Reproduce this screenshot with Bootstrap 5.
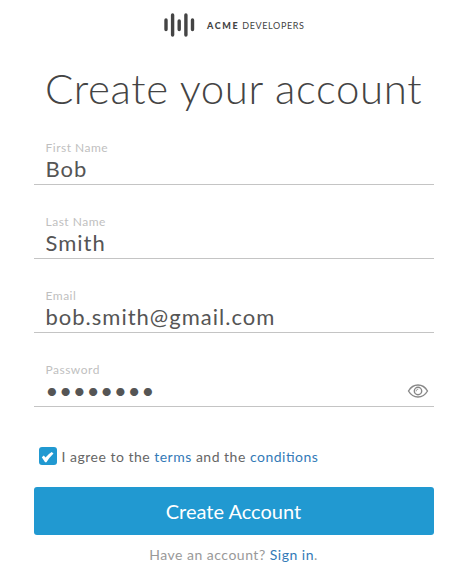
<!DOCTYPE html>
<html lang="en">
<head>
<meta charset="utf-8">
<meta name="viewport" content="width=device-width, initial-scale=1">
<title>Create your account</title>
<link href="https://cdn.jsdelivr.net/npm/bootstrap@5.3.0/dist/css/bootstrap.min.css" rel="stylesheet">
<style>
body{font-family:Lato,sans-serif;color:#555;background:#fff;overflow:hidden}
a{color:#337ab7}
.signup{width:400px;margin-left:34px}
.brand{height:50px;padding-left:130px;color:#444}
.brand-name{font-size:9px;letter-spacing:.65px;margin-left:12px;line-height:12px;padding-top:1px}
.brand-name b{font-weight:900;letter-spacing:1.6px}
.headline{font-size:42px;font-weight:300;line-height:50px;letter-spacing:.6px;color:#444;margin:13px 0 20px 11px}
.field{height:52px;margin-bottom:22px;border-bottom:1px solid #c4c4c4;padding-left:11.5px}
.field label{font-size:12px;line-height:14px;letter-spacing:.5px;color:#bfbfbf;padding-top:8px}
.field .form-control{font-size:22px;line-height:28px;height:28px;letter-spacing:1px;color:#555}
.field .secret{letter-spacing:.95px}
.agree{height:20px;margin:39px 0 0 5px;font-size:14px;letter-spacing:.5px;color:#666}
.agree a{font-feature-settings:"liga" 1}
.tick{width:18px;height:18px;border-radius:3px;background:#2199d1;margin-right:4.5px}
.btn-create{height:48px;margin-top:21px;background:#2199d1;color:#fff;font-size:20px;border-radius:3px;padding:0 1px 0 0}
.btn-create:hover{background:#1b88bb;color:#fff}
.have{font-size:14px;line-height:20px;letter-spacing:.5px;color:#999;margin:10px 1px 0 0}
</style>
</head>
<body>
<main class="signup">
  <header class="brand d-flex align-items-center">
    <svg width="31" height="24" viewBox="0 0 31 24" fill="none" stroke="#444" stroke-width="3.4" stroke-linecap="round"><path d="M2 7v9.6M8.6 2v20M15.2 8v8.6M21.900 2v20M28.500 7v9.600"/></svg>
    <span class="brand-name text-nowrap"><b>ACME</b> DEVELOPERS</span>
  </header>
  <h1 class="headline text-nowrap">Create your account</h1>
  <form class="mb-0">
    <div class="field"><label class="d-block" for="first">First Name</label><input class="form-control border-0 rounded-0 p-0 shadow-none bg-transparent" id="first" type="text" value="Bob"></div>
    <div class="field"><label class="d-block" for="last">Last Name</label><input class="form-control border-0 rounded-0 p-0 shadow-none bg-transparent" id="last" type="text" value="Smith"></div>
    <div class="field"><label class="d-block" for="email">Email</label><input class="form-control border-0 rounded-0 p-0 shadow-none bg-transparent" id="email" type="text" value="bob.smith@gmail.com"></div>
    <div class="field mb-0"><label class="d-block" for="pass">Password</label>
      <div class="d-flex align-items-center pe-1"><input class="form-control secret border-0 rounded-0 p-0 shadow-none bg-transparent" id="pass" type="password" value="password">
      <svg class="flex-shrink-0" width="22" height="16" viewBox="1 0 22 16" fill="none" stroke="#888" stroke-width="1.4" overflow="visible"><path d="M1.500 8C4 3.700 7.200 2 11 2s7 1.700 9.500 6C18 12.300 14.800 14 11 14S4 12.300 1.500 8Z"/><circle cx="11" cy="8" r="3.700"/><path d="M9.200 8.300c0-1.300.7-2 2-2" stroke-width="1"/></svg></div></div>
    <div class="agree d-flex align-items-center">
      <span class="tick d-inline-flex" role="checkbox" aria-checked="true"><svg width="18" height="18" viewBox="0 0 18 18" fill="#fff"><path d="M2.800 10.300 4.800 8.400 6.500 10.400Q9.300 7.200 12.700 5.100L14.500 6.400Q10.200 10.500 7.400 15.300H6.100Z"/></svg></span>
      <span class="text-nowrap">I agree to the <a class="text-decoration-none" href="#">terms</a> and the <a class="text-decoration-none" href="#">conditions</a></span>
    </div>
    <button class="btn btn-create w-100 border-0 d-block" type="button">Create Account</button>
  </form>
  <p class="have text-center">Have an account? <a class="text-decoration-none" href="#">Sign in</a>.</p>
</main>
<script src="https://cdn.jsdelivr.net/npm/bootstrap@5.3.0/dist/js/bootstrap.bundle.min.js"></script>
</body>
</html>
